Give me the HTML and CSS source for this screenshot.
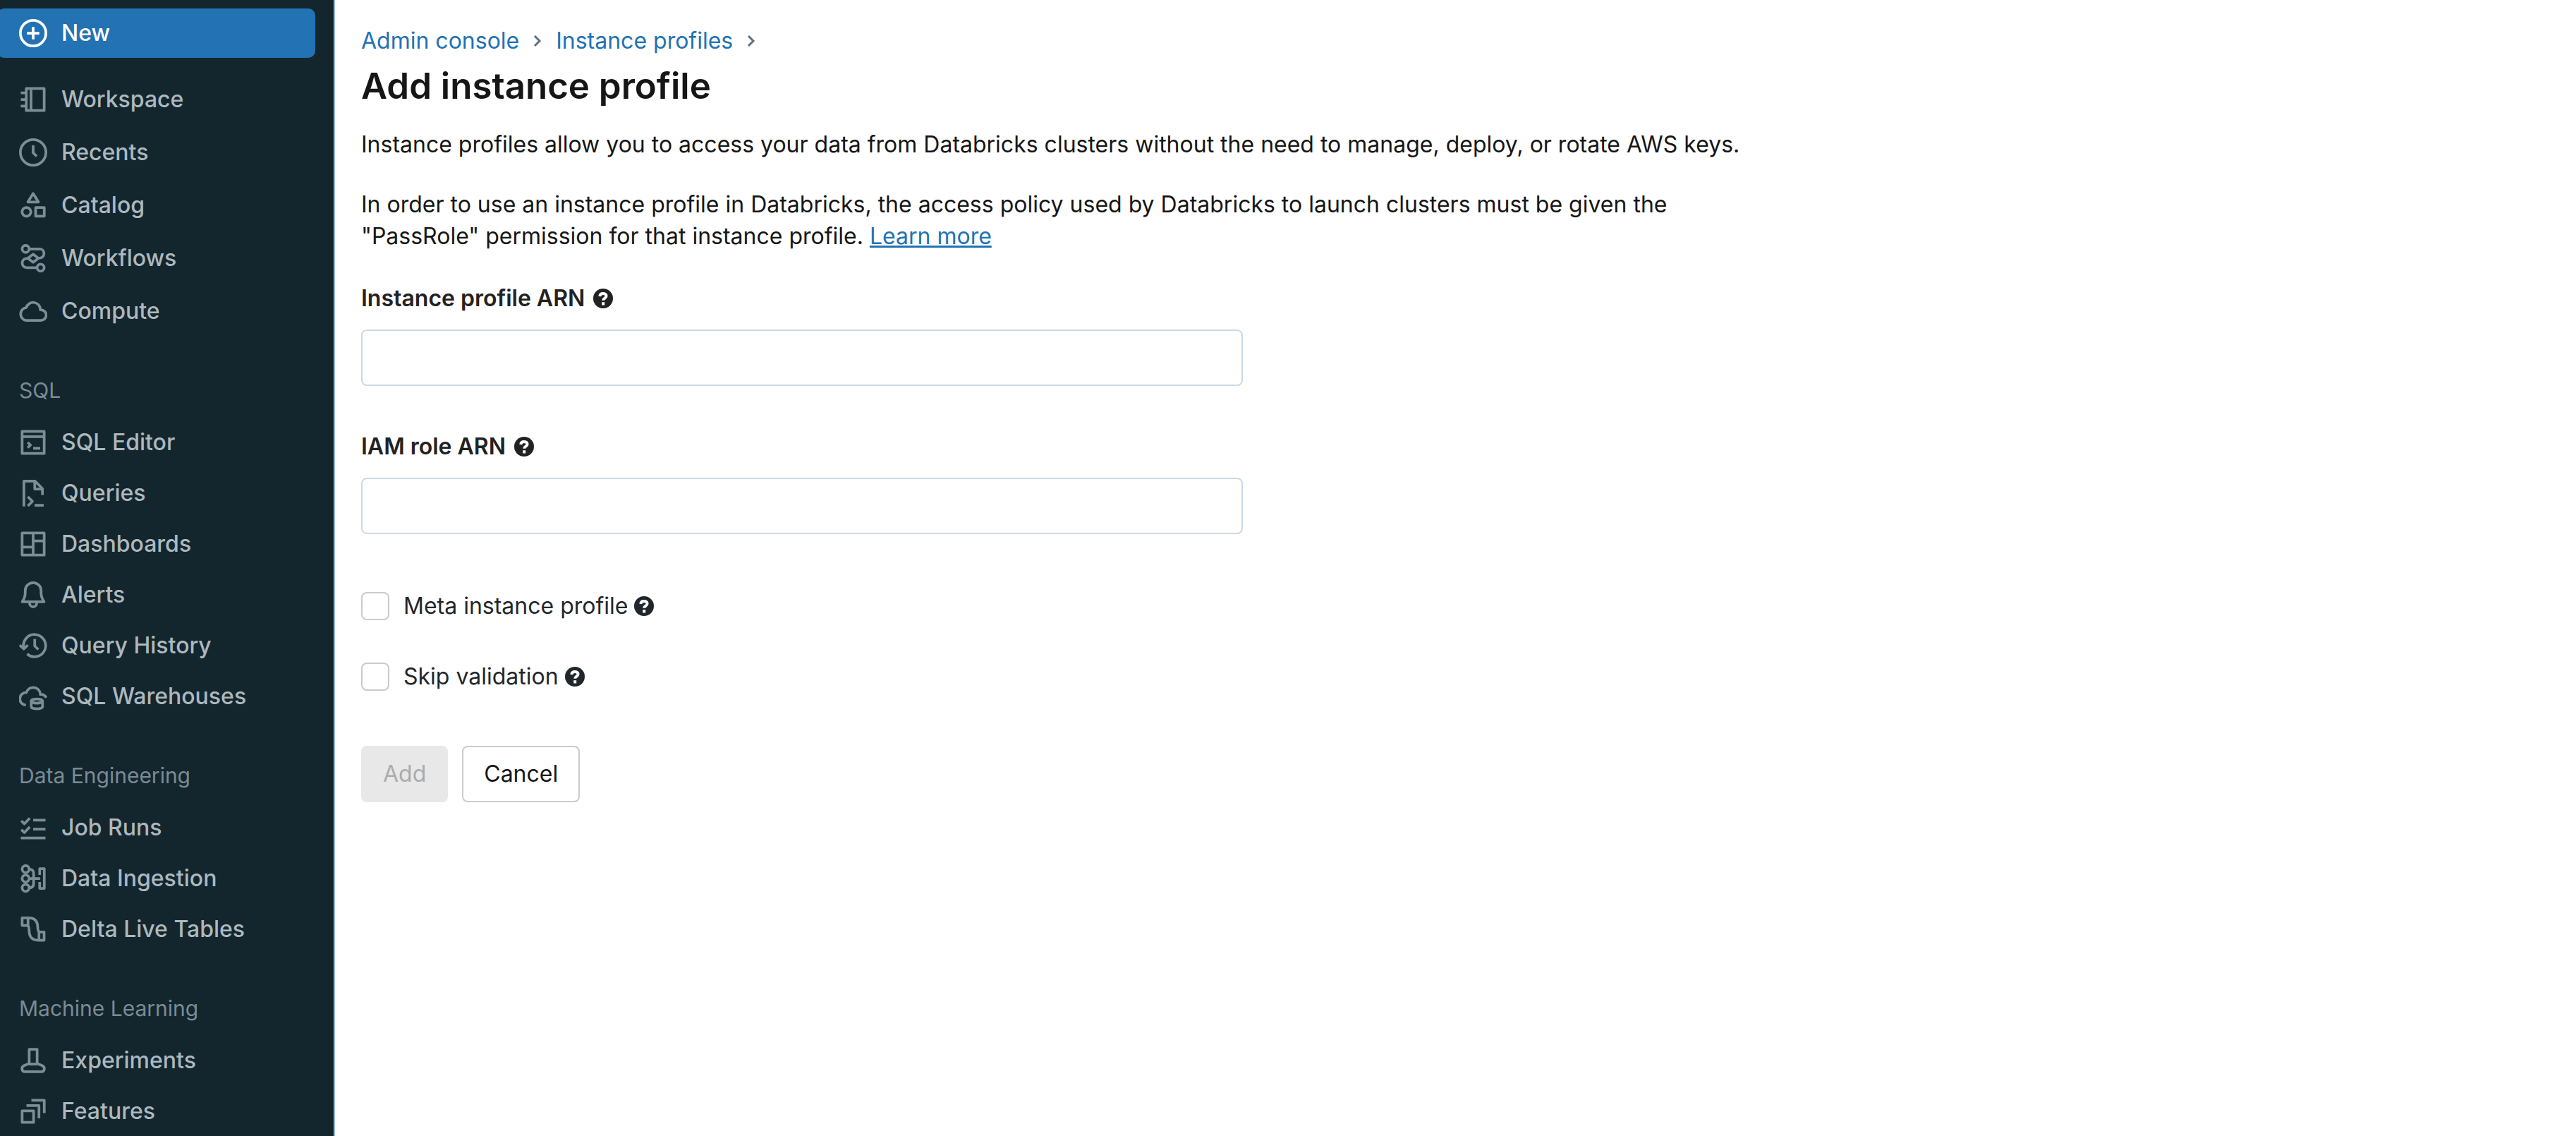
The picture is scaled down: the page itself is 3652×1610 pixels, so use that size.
FILE: index.html
```html
<!DOCTYPE html>
<html lang="en">
<head>
<meta charset="utf-8">
<meta name="viewport" content="width=device-width, initial-scale=1">
<title>Add instance profile</title>
<link rel="stylesheet" href="styles.css">
</head>
<body>
<div class="app">
  <nav class="sidebar" aria-label="Main">
    <button type="button" class="new-button">
      <svg class="icon" viewBox="0 0 16 16"><circle cx="8" cy="8" r="7.25"/><path d="M8 4.5v7M4.5 8h7"/></svg>
      New
    </button>
    <ul class="nav-list nav-list-primary">
      <li><a class="nav-link" href="#"><svg class="icon" viewBox="0 0 16 16"><path d="M4.1 1.75h10.15v12.5H4.1zM6.8 1.75v12.5M1 4.25h3M1 8h3M1 11.75h3"/></svg>Workspace</a></li>
      <li><a class="nav-link" href="#"><svg class="icon" viewBox="0 0 16 16"><circle cx="8" cy="8" r="7.25"/><path d="M8 4v4.2l2 2"/></svg>Recents</a></li>
      <li><a class="nav-link" href="#"><svg class="icon" viewBox="0 0 16 16"><path d="M8 1.3l3 4.8H5zM9.4 9.2h4.9v4.9H9.4z"/><circle cx="4.2" cy="11.7" r="2.5"/></svg>Catalog</a></li>
      <li><a class="nav-link" href="#"><svg class="icon" viewBox="0 0 16 16"><circle cx="3.75" cy="2.7" r="2"/><circle cx="12.25" cy="13.3" r="2"/><path d="M5.75 2.7h5.9a2.6 2.6 0 0 1 .6 5.1L11 8M10.25 13.3H4.3a2.6 2.6 0 0 1-.6-5.1L5 8M8 5.7l3 2.3-3 2.3L5 8z"/></svg>Workflows</a></li>
      <li><a class="nav-link" href="#"><svg class="icon" viewBox="0 0 16 16"><path d="M3.9 13.25h8.5a3 3 0 0 0 0-6h-.3v-.4a4.1 4.1 0 0 0-8-.9 3.7 3.7 0 0 0-.2 7.3z"/></svg>Compute</a></li>
    </ul>
    <section class="nav-section">
      <h2 class="nav-heading">SQL</h2>
      <ul class="nav-list">
        <li><a class="nav-link" href="#"><svg class="icon" viewBox="0 0 16 16"><path d="M1.75 1.75h12.5v12.5H1.75zM1.75 4.7h12.5M4.9 8l1.6 1.5L4.9 11M8 11.3h4"/></svg>SQL Editor</a></li>
        <li><a class="nav-link" href="#"><svg class="icon" viewBox="0 0 16 16"><path d="M2.75 15.5V1.1h6.3l4.2 4.3V9M8.9 1.1v4.5h4.3M5 10l2.6 2.6L5 15.2M8.8 14.8H14"/></svg>Queries</a></li>
        <li><a class="nav-link" href="#"><svg class="icon" viewBox="0 0 16 16"><path d="M1.75 1.75h12.5v12.5H1.75zM8 1.75v12.5M1.75 9.7H8M8 6.2h6.25"/></svg>Dashboards</a></li>
        <li><a class="nav-link" href="#"><svg class="icon" viewBox="0 0 16 16"><path d="M1.8 11.9h12.4c-1.2-1.6-1.7-2.6-1.7-5V5.6a4.5 4.5 0 0 0-9 0v1.3c0 2.4-.5 3.4-1.7 5zM6 12.2v.6a2 2 0 0 0 4 0v-.6"/></svg>Alerts</a></li>
        <li><a class="nav-link" href="#"><svg class="icon" viewBox="0 0 16 16"><path d="M2.7 9.6A6.3 6.3 0 1 1 4.6 12.7M.4 7.7l2.3 2.2L5 7.7M8.9 4.2v4l2 2"/></svg>Query History</a></li>
        <li><a class="nav-link" href="#"><svg class="icon" viewBox="0 0 16 16"><path d="M3.9 12.9a3.5 3.5 0 0 1 .2-7.1 4.1 4.1 0 0 1 8 .8v.3a3.5 3.5 0 0 1 3.3 1.8"/><ellipse cx="10.1" cy="10.6" rx="3.2" ry="1.2"/><path d="M6.9 10.6v3.2c0 1.6 6.4 1.6 6.4 0v-3.2"/></svg>SQL Warehouses</a></li>
      </ul>
    </section>
    <section class="nav-section">
      <h2 class="nav-heading">Data Engineering</h2>
      <ul class="nav-list">
        <li><a class="nav-link" href="#"><svg class="icon" viewBox="0 0 16 16"><path d="M1.3 4.1L3 5.8l3.1-3.2M1.3 9.1L3 10.8l3.1-3.2M8 3.7h7M8 8.8h7M1 13.8h14"/></svg>Job Runs</a></li>
        <li><a class="nav-link" href="#"><svg class="icon" viewBox="0 0 16 16"><circle cx="3.75" cy="2.7" r="2"/><circle cx="3.75" cy="8" r="2"/><circle cx="3.75" cy="13.3" r="2"/><path d="M5.75 2.7c1.6 0 2.5.8 2.5 2.4v5.8c0 1.6-.9 2.4-2.5 2.4M5.75 8h6.2M11.7 6V2.4h2.6v11.2h-2.6V10"/></svg>Data Ingestion</a></li>
        <li><a class="nav-link" href="#"><svg class="icon" viewBox="0 0 16 16"><path d="M1.75 1.5H5.6c3.9 0 5 2.5 5 5.6 0 1.8.4 2.4 1.6 2.4h2v4.7h-3.5c-3.9 0-5-2.7-5-5.8 0-1.8-.3-2.6-1.5-2.6H1.75zM5.1 1.5v4.3M11.3 9.5v4.7"/></svg>Delta Live Tables</a></li>
      </ul>
    </section>
    <section class="nav-section">
      <h2 class="nav-heading">Machine Learning</h2>
      <ul class="nav-list">
        <li><a class="nav-link" href="#"><svg class="icon" viewBox="0 0 16 16"><path d="M5.75 1.6h4.5v8.1l2.9 1.2c1.9.9 1.3 3.4-.4 3.4h-9.5c-1.7 0-2.3-2.5-.4-3.4l2.9-1.2zM5.75 10h4.5"/></svg>Experiments</a></li>
        <li><a class="nav-link" href="#"><svg class="icon" viewBox="0 0 16 16"><path d="M1.75 7.75h6.5v6.5h-6.5zM4.2 4.7h7.1V12M7 1.7h7.3V9"/></svg>Features</a></li>
      </ul>
    </section>
  </nav>

  <main class="content">
    <nav class="breadcrumb" aria-label="Breadcrumb">
      <a href="#">Admin console</a>
      <svg class="chevron" viewBox="0 0 12 16"><path d="M2 1l7 7-7 7"/></svg>
      <a href="#">Instance profiles</a>
      <svg class="chevron" viewBox="0 0 12 16"><path d="M2 1l7 7-7 7"/></svg>
    </nav>
    <h1 class="title">Add instance profile</h1>
    <div class="intro">
      <p>Instance profiles allow you to access your data from Databricks clusters without the need to manage, deploy, or rotate AWS keys.</p>
      <p>In order to use an instance profile in Databricks, the access policy used by Databricks to launch clusters must be given the "PassRole" permission for that instance profile. <a class="learn-more" href="#">Learn more</a></p>
    </div>
    <form class="form">
      <div class="field">
        <label class="field-label" for="profile-arn">Instance profile ARN
          <svg class="help" viewBox="0 0 28 28"><circle cx="14" cy="14" r="14"/><path d="M9.3 11c.2-2.8 2-4 4.6-4 2.7 0 4.7 1.4 4.7 3.600 0 3-4.400 2.800-4.400 6.200"/><path d="M14.200 19.200v4.300"/></svg>
        </label>
        <input class="text-input" id="profile-arn" type="text">
      </div>
      <div class="field">
        <label class="field-label" for="role-arn">IAM role ARN
          <svg class="help" viewBox="0 0 28 28"><circle cx="14" cy="14" r="14"/><path d="M9.3 11c.2-2.8 2-4 4.6-4 2.7 0 4.7 1.4 4.7 3.600 0 3-4.400 2.800-4.400 6.200"/><path d="M14.200 19.200v4.300"/></svg>
        </label>
        <input class="text-input" id="role-arn" type="text">
      </div>
      <div class="options">
        <div class="option">
          <input class="checkbox" id="meta-profile" type="checkbox">
          <label class="option-label" for="meta-profile">Meta instance profile
            <svg class="help" viewBox="0 0 28 28"><circle cx="14" cy="14" r="14"/><path d="M9.3 11c.2-2.8 2-4 4.6-4 2.7 0 4.7 1.4 4.7 3.600 0 3-4.400 2.800-4.400 6.200"/><path d="M14.200 19.200v4.300"/></svg>
          </label>
        </div>
        <div class="option">
          <input class="checkbox" id="skip-validation" type="checkbox">
          <label class="option-label" for="skip-validation">Skip validation
            <svg class="help" viewBox="0 0 28 28"><circle cx="14" cy="14" r="14"/><path d="M9.3 11c.2-2.8 2-4 4.6-4 2.7 0 4.7 1.4 4.7 3.600 0 3-4.400 2.800-4.400 6.200"/><path d="M14.200 19.200v4.300"/></svg>
          </label>
        </div>
      </div>
      <div class="actions">
        <button type="submit" class="button button-primary" disabled>Add</button>
        <button type="button" class="button">Cancel</button>
      </div>
    </form>
  </main>
</div>
</body>
</html>
```
FILE: styles.css
```css
* {
  box-sizing: border-box;
}

body {
  margin: 0;
  background: #fff;
  color: #161616;
  font: 400 32px/44px Inter, "Liberation Sans", sans-serif;
}

h1,
h2,
p,
ul {
  margin: 0;
  padding: 0;
}

a {
  color: #2272b4;
  text-decoration: none;
}

button,
input {
  font: inherit;
  margin: 0;
}

.app {
  display: flex;
  min-height: 100vh;
  overflow: hidden;
}

/* Sidebar */

.sidebar {
  display: flex;
  flex: none;
  flex-direction: column;
  width: 474px;
  padding-top: 12px;
  border-right: 2px solid #0058d0;
  background: #13262d;
  box-shadow: 1px 0 #bcd6f2;
}

.new-button {
  display: flex;
  align-items: center;
  gap: 20px;
  height: 70px;
  margin: 0 25px 27px -4px;
  padding: 0 31px;
  border: 0;
  border-radius: 10px;
  background: #2272b4;
  color: #fff;
  font-weight: 500;
}

.nav-list {
  display: flex;
  flex-direction: column;
  gap: 8px;
  list-style: none;
}

.nav-list-primary {
  gap: 11px;
}

.nav-link {
  display: flex;
  align-items: center;
  gap: 20px;
  height: 64px;
  padding: 0 27px;
  color: #adb8bf;
  font-weight: 500;
}

.nav-section {
  display: flex;
  flex-direction: column;
  gap: 12px;
  padding-top: 50px;
}

.nav-heading {
  padding: 0 27px;
  color: #7b8b95;
  font-size: 30px;
  font-weight: 400;
  line-height: 60px;
}

.icon {
  flex: none;
  width: 40px;
  height: 40px;
  fill: none;
  stroke: #7d8d97;
  stroke-width: 1.5;
  stroke-linejoin: round;
}

.new-button .icon {
  stroke: #fff;
}

/* Page content */

.content {
  flex: 1;
  min-width: 0;
  padding: 36px 38px;
}

.breadcrumb {
  display: flex;
  align-items: center;
  gap: 20px;
}

.chevron {
  width: 12px;
  height: 16px;
  fill: none;
  stroke: #5f7281;
  stroke-width: 3;
}

.title {
  margin-bottom: 18px;
  font-size: 51px;
  font-weight: 600;
  line-height: 84px;
}

.intro {
  display: flex;
  flex-direction: column;
  gap: 40px;
  max-width: 2000px;
  line-height: 45px;
}

.learn-more {
  text-decoration: underline;
}

.form {
  display: flex;
  flex-direction: column;
  max-width: 1250px;
  padding-top: 44px;
}

.field {
  display: flex;
  flex-direction: column;
  gap: 22px;
  margin-bottom: 64px;
}

.field-label,
.option-label {
  display: flex;
  align-items: center;
  gap: 9px;
}

.field-label {
  gap: 12px;
  color: #222;
  font-weight: 600;
}

.help {
  width: 28px;
  height: 28px;
  fill: currentColor;
}

.help path {
  fill: none;
  stroke: #fff;
  stroke-width: 4;
}

.text-input {
  width: 100%;
  height: 80px;
  padding: 0 24px;
  border: 2px solid #ccd9e6;
  border-radius: 8px;
  background: #fff;
}

.options {
  display: flex;
  flex-direction: column;
  gap: 56px;
  padding-top: 16px;
}

.option {
  display: flex;
  align-items: center;
  gap: 20px;
  color: #1f272d;
}

.checkbox {
  appearance: none;
  width: 40px;
  height: 40px;
  border: 2px solid #cbcbcb;
  border-radius: 8px;
  background: #fff;
}

.actions {
  display: flex;
  gap: 20px;
  padding-top: 76px;
}

.button {
  height: 80px;
  padding: 0 29px;
  border: 2px solid #cbcbcb;
  border-radius: 8px;
  background: #fff;
  color: #161616;
}

.button-primary {
  border-color: #e8e8e8;
  background: #e8e8e8;
  color: #acacac;
}
```
